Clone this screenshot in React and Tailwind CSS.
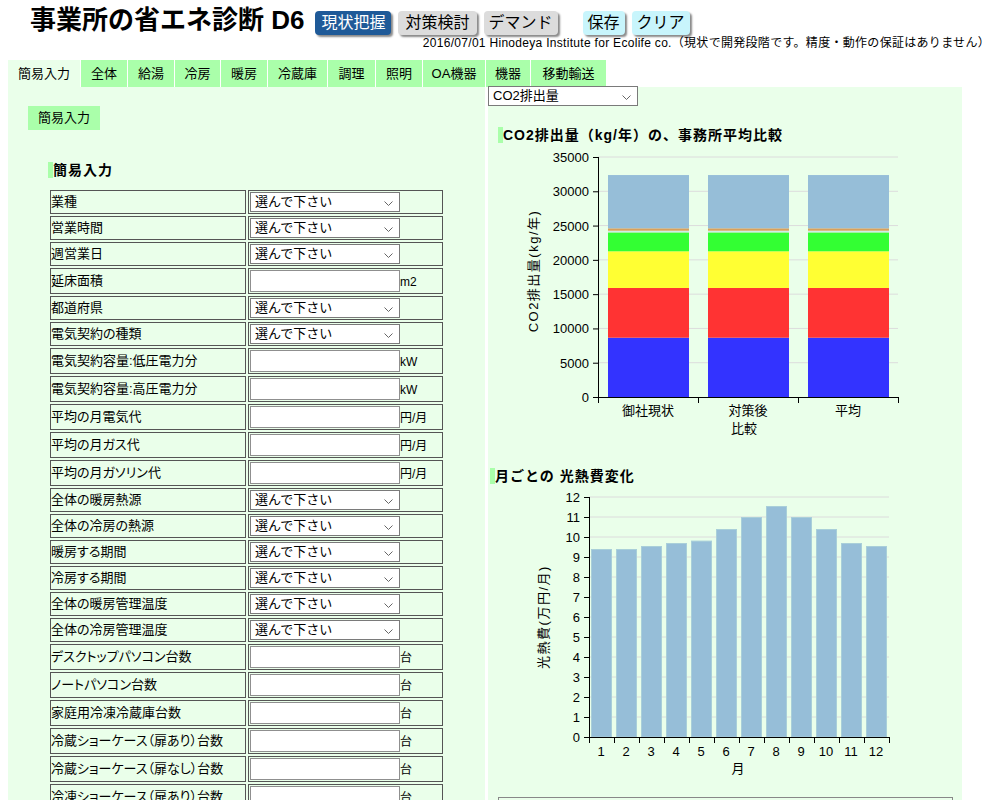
import React from "react";

const FONT = "font-['Liberation_Sans','Noto_Sans_CJK_JP',sans-serif]";

const tabs = [
  ["簡易入力", "w-[72px]"],
  ["全体", "w-[46px]"],
  ["給湯", "w-[46px]"],
  ["冷房", "w-[45px]"],
  ["暖房", "w-[46px]"],
  ["冷蔵庫", "w-[59px]"],
  ["調理", "w-[47px]"],
  ["照明", "w-[46px]"],
  ["OA機器", "w-[62px]"],
  ["機器", "w-[44px]"],
  ["移動輸送", "w-[75px]"],
];

const rows = [
  ["業種", "select"],
  ["営業時間", "select"],
  ["週営業日", "select"],
  ["延床面積", "input", "m2"],
  ["都道府県", "select"],
  ["電気契約の種類", "select"],
  ["電気契約容量:低圧電力分", "input", "kW"],
  ["電気契約容量:高圧電力分", "input", "kW"],
  ["平均の月電気代", "input", "円/月"],
  ["平均の月ガス代", "input", "円/月"],
  ["平均の月ガソリン代", "input", "円/月"],
  ["全体の暖房熱源", "select"],
  ["全体の冷房の熱源", "select"],
  ["暖房する期間", "select"],
  ["冷房する期間", "select"],
  ["全体の暖房管理温度", "select"],
  ["全体の冷房管理温度", "select"],
  ["デスクトップパソコン台数", "input", "台"],
  ["ノートパソコン台数", "input", "台"],
  ["家庭用冷凍冷蔵庫台数", "input", "台"],
  ["冷蔵ショーケース（扉あり）台数", "input", "台"],
  ["冷蔵ショーケース（扉なし）台数", "input", "台"],
  ["冷凍ショーケース（扉あり）台数", "input", "台"],
  ["冷凍ショーケース（扉なし）台数", "input", "台"],
];

function Chevron() {
  return (
    <svg width="9" height="6" viewBox="0 0 9 6" className="absolute right-[6px] top-[8px]">
      <path d="M0.5 0.5 L4.5 4.5 L8.5 0.5" fill="none" stroke="#666" strokeWidth="1" />
    </svg>
  );
}

function SelectBox({ label, width = "w-[150px]" }) {
  return (
    <div className={`relative ${width} h-[20px] bg-white border border-[#7a7a7a] text-[13px] leading-[18px] pl-[4px] text-black`}>
      {label}
      <Chevron />
    </div>
  );
}

function Heading({ children, className = "" }) {
  return (
    <div className={`flex items-center h-[16px] ${className}`}>
      <span className="w-[5px] h-[16px] bg-[#aaffaa]" />
      <span className="text-[14px] font-bold leading-[16px] tracking-[1px] text-black">{children}</span>
    </div>
  );
}

const co2Segments = [
  [0, 8650, "#3333ff"],
  [8650, 15900, "#ff3333"],
  [15900, 21250, "#ffff33"],
  [21250, 23950, "#33ff33"],
  [23950, 24100, "#99ee99"],
  [24100, 24250, "#c8e8f0"],
  [24250, 24600, "#d9a05a"],
  [24600, 32370, "#96bed8"],
];

function Co2Chart() {
  const y = (v) => 250 - (v / 35000) * 240;
  const ticks = [0, 5000, 10000, 15000, 20000, 25000, 30000, 35000];
  const bars = [
    [120, "御社現状"],
    [220, "対策後"],
    [320, "平均"],
  ];
  return (
    <svg width="474" height="294" className={FONT}>
      {ticks.map((t) => (
        <g key={t}>
          {t > 0 && <line x1="110" x2="410" y1={y(t)} y2={y(t)} stroke="#dcdcdc" />}
          <line x1="105" x2="110" y1={y(t) + 0.5} y2={y(t) + 0.5} stroke="#000" />
          <text x="101" y={y(t) + 5} fontSize="13" textAnchor="end" fill="#000">
            {t}
          </text>
        </g>
      ))}
      {bars.map(([x, name]) => (
        <g key={name}>
          {co2Segments.map(([a, b, c]) => (
            <rect key={a} x={x} y={y(b)} width="81" height={y(a) - y(b)} fill={c} />
          ))}
          <text x={x + 40} y="268" fontSize="13" textAnchor="middle" fill="#000">
            {name}
          </text>
        </g>
      ))}
      <line x1="110.5" x2="110.5" y1="10" y2="256" stroke="#000" />
      <line x1="110" x2="411" y1="250.5" y2="250.5" stroke="#000" />
      {[210, 310, 410].map((x) => (
        <line key={x} x1={x + 0.5} x2={x + 0.5} y1="250" y2="256" stroke="#000" />
      ))}
      <text x="256" y="286" fontSize="13" textAnchor="middle" fill="#000">
        比較
      </text>
      <text transform="translate(50 124) rotate(-90)" fontSize="13" textAnchor="middle" fill="#000" letterSpacing="1.5">
        CO2排出量(kg/年)
      </text>
    </svg>
  );
}

const monthly = [9.4, 9.4, 9.55, 9.7, 9.82, 10.4, 11.0, 11.55, 11.0, 10.4, 9.7, 9.55];

function MonthlyChart() {
  const y = (v) => 249 - v * 20;
  const ticks = [0, 1, 2, 3, 4, 5, 6, 7, 8, 9, 10, 11, 12];
  return (
    <svg width="474" height="306" className={FONT}>
      {ticks.map((t) => (
        <g key={t}>
          {t > 0 && <line x1="101" x2="401" y1={y(t)} y2={y(t)} stroke="#dcdcdc" />}
          <line x1="96" x2="101" y1={y(t) + 0.5} y2={y(t) + 0.5} stroke="#000" />
          <text x="92" y={y(t) + 5} fontSize="13" textAnchor="end" fill="#000">
            {t}
          </text>
        </g>
      ))}
      {monthly.map((v, i) => (
        <g key={i}>
          <rect x={103.5 + i * 25} y={y(v) + 0.5} width="20" height={249 - y(v) - 0.5} fill="#96bed8" stroke="#a9cfd9" />
          <text x={113 + i * 25} y="268" fontSize="13" textAnchor="middle" fill="#000">
            {i + 1}
          </text>
          <line x1={126.5 + i * 25} x2={126.5 + i * 25} y1="249" y2="255" stroke="#000" />
        </g>
      ))}
      <line x1="101.5" x2="101.5" y1="9" y2="255" stroke="#000" />
      <line x1="101" x2="401" y1="249.5" y2="249.5" stroke="#000" />
      <text x="250" y="285" fontSize="13" textAnchor="middle" fill="#000">
        月
      </text>
      <text transform="translate(60 129) rotate(-90)" fontSize="13" textAnchor="middle" fill="#000" letterSpacing="1.5">
        光熱費(万円/月)
      </text>
    </svg>
  );
}

export default function App() {
  return (
    <div className={`${FONT} bg-white text-black w-[1007px] h-[800px] overflow-hidden`}>
      {/* header */}
      <div className="flex items-start pl-[30px] pt-[4px] h-[32px]">
        <h1 className="text-[26px] font-bold leading-[32px] whitespace-nowrap">事業所の省エネ診断 D6</h1>
        <div className="flex gap-[7px] ml-[11px] mt-[7px]">
          <button className="h-[24px] px-[6px] rounded-[4px] bg-[#1f5a98] text-white text-[16px] leading-[24px] shadow-[2px_2px_2px_#8a8a8a]">
            現状把握
          </button>
          <button className="h-[24px] px-[7px] rounded-[4px] bg-[#dcdcdc] text-black text-[16px] leading-[24px] shadow-[2px_2px_2px_#8a8a8a]">
            対策検討
          </button>
          <button className="h-[24px] px-[5px] rounded-[4px] bg-[#dcdcdc] text-black text-[16px] leading-[24px] shadow-[2px_2px_2px_#8a8a8a]">
            デマンド
          </button>
        </div>
        <div className="flex gap-[7px] ml-[25px] mt-[7px]">
          <button className="h-[24px] px-[5px] rounded-[4px] bg-[#c8f5fc] text-black text-[16px] leading-[24px] shadow-[2px_2px_2px_#8a8a8a]">
            保存
          </button>
          <button className="h-[24px] px-[5px] rounded-[4px] bg-[#c8f5fc] text-black text-[16px] leading-[24px] shadow-[2px_2px_2px_#8a8a8a]">
            クリア
          </button>
        </div>
      </div>
      <div className="flex justify-end pr-[17px] h-[28px] text-[12px] leading-[14px] pt-[4px] whitespace-nowrap tracking-[0.3px]">
        2016/07/01 Hinodeya Institute for Ecolife co.（現状で開発段階です。精度・動作の保証はありません）
      </div>

      {/* tabs */}
      <div className="flex gap-[1px] ml-[8px] h-[27px]">
        {tabs.map(([name, w], i) => (
          <div
            key={name}
            className={`${w} flex items-center justify-center text-[13px] ${i === 0 ? "bg-[#eaffea]" : "bg-[#aaffaa]"}`}
          >
            {name}
          </div>
        ))}
      </div>

      {/* content */}
      <div className="flex ml-[8px] items-start">
        {/* left panel */}
        <div className="w-[477px] h-[720px] bg-[#eaffea] pt-[19px] pl-[20px]">
          <div className="w-[72px] h-[24px] bg-[#aaffaa] flex items-center justify-center text-[13px]">簡易入力</div>
          <Heading className="mt-[32px] ml-[20px]">簡易入力</Heading>
          <table className="mt-[10px] ml-[20px] border-separate border-spacing-[2px] text-[13px]">
            <tbody>
              {rows.map(([label, kind, unit]) => (
                <tr key={label}>
                  <td className={`w-[196px] ${kind === "select" ? "h-[24px]" : "h-[26px]"} border border-[#555] p-0 leading-[14px] whitespace-nowrap [font-feature-settings:'palt']`}>
                    {label}
                  </td>
                  <td className="w-[195px] border border-[#555] p-[1px]">
                    {kind === "select" ? (
                      <SelectBox label="選んで下さい" />
                    ) : (
                      <div className="flex items-center">
                        <div className="w-[150px] h-[22px] bg-white border border-[#8f8f8f]" />
                        <span className="text-[12px] leading-[14px] mt-[2px]">{unit}</span>
                      </div>
                    )}
                  </td>
                </tr>
              ))}
            </tbody>
          </table>
        </div>

        {/* right panel */}
        <div className="w-[474px] h-[720px] ml-[3px] bg-[#eaffea] flex flex-col">
          <div className="-mt-[1px]">
            <SelectBox label="CO2排出量" />
          </div>
          <Heading className="mt-[21px] ml-[10px]">CO2排出量（kg/年）の、事務所平均比較</Heading>
          <div className="mt-[4px]">
            <Co2Chart />
          </div>
          <Heading className="mt-[27px] ml-[2px]">月ごとの 光熱費変化</Heading>
          <div className="mt-[4px]">
            <MonthlyChart />
          </div>
          <div className="ml-[10px] mt-[3px] w-[455px] h-[40px] border border-[#888]" />
        </div>
      </div>
    </div>
  );
}
